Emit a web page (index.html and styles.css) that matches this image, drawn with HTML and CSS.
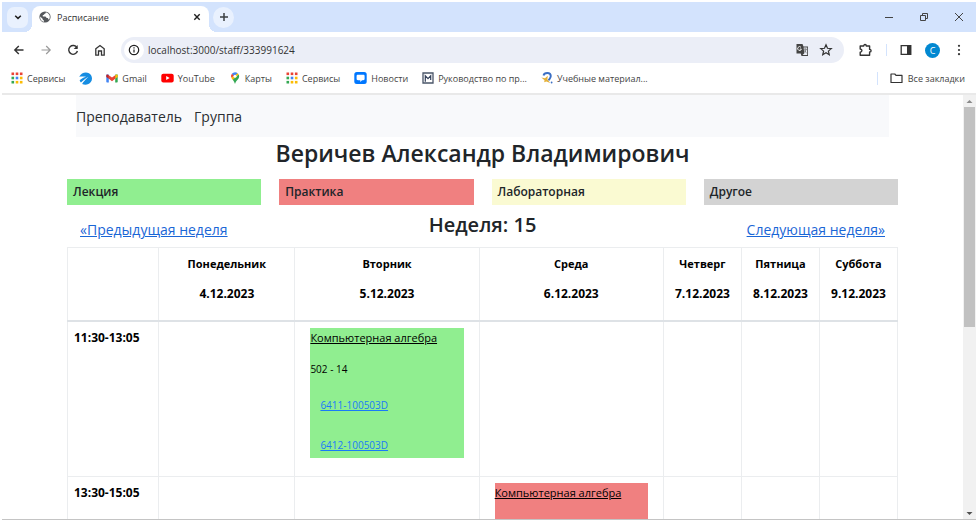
FILE: index.html
```html
<!DOCTYPE html>
<html lang="ru">
<head>
<meta charset="utf-8">
<title>Расписание</title>
<link rel="stylesheet" href="styles.css">
</head>
<body>
<svg class="defs" aria-hidden="true">
  <symbol id="apps" viewBox="0 0 12 12">
    <g fill="#ea4335"><rect x="0.5" y="0.5" width="2.6" height="2.6"/><rect x="4.7" y="0.5" width="2.6" height="2.6"/><rect x="8.9" y="0.5" width="2.6" height="2.6"/></g>
    <rect x="0.5" y="4.7" width="2.6" height="2.6" fill="#34a853"/><rect x="4.7" y="4.7" width="2.6" height="2.6" fill="#4285f4"/><rect x="8.9" y="4.7" width="2.6" height="2.6" fill="#fbbc04"/>
    <rect x="0.5" y="8.9" width="2.6" height="2.6" fill="#34a853"/><g fill="#fbbc04"><rect x="4.7" y="8.9" width="2.6" height="2.6"/><rect x="8.9" y="8.9" width="2.6" height="2.6"/></g>
  </symbol>
</svg>

<div class="browser">
  <header class="tabstrip">
    <button class="tab-search" aria-label="Поиск вкладок"><svg width="10" height="10" viewBox="0 0 10 10"><path d="M2.2 3.8 5 6.4 7.8 3.8" fill="none" stroke="#1f1f1f" stroke-width="1.5"/></svg></button>
    <div class="tab">
      <svg width="12" height="12" viewBox="0 0 12 12"><circle cx="6" cy="6" r="5.6" fill="#55585c"/><path d="M6.8 1.2c.3 1.1-.6 1.6-1.5 1.7.1 1-.7 1.2-1.5 1.2v1.5h2.4c1 .2.8 1.400 1.800 1.500h.8c.6.4.4 1.500 1.100 1.600A4.800 4.800 0 0 0 6.800 1.200zM1.200 5.600l2.600 2.500v1.100h1.200v1.500A4.800 4.800 0 0 1 1.200 5.600z" fill="#fff"/></svg>
      <span class="tab-title">Расписание</span>
      <button class="tab-close" aria-label="Закрыть вкладку"><svg width="8" height="8" viewBox="0 0 8 8"><path d="M1.300 1.300 6.700 6.700M6.700 1.300 1.300 6.700" stroke="#1f1f1f" stroke-width="1.400"/></svg></button>
    </div>
    <button class="tab-new" aria-label="Новая вкладка"><svg width="10" height="10" viewBox="0 0 10 10"><path d="M5 1v8M1 5h8" stroke="#3c4043" stroke-width="1.500"/></svg></button>
    <div class="window-controls">
      <button aria-label="Свернуть"><svg width="10" height="10" viewBox="0 0 10 10"><path d="M1 5.500h8" stroke="#444" /></svg></button>
      <button aria-label="Свернуть в окно"><svg width="10" height="10" viewBox="0 0 10 10"><path d="M1.500 3.500h5v5h-5zM3.500 3V1.500h5v5H7" fill="none" stroke="#444"/></svg></button>
      <button aria-label="Закрыть"><svg width="10" height="10" viewBox="0 0 10 10"><path d="M1 1l8 8M9 1 1 9" stroke="#444"/></svg></button>
    </div>
  </header>

  <div class="toolbar">
    <button aria-label="Назад"><svg width="12" height="12" viewBox="0 0 12 12"><path d="M10.500 6H2M5.800 2 1.800 6l4 4" fill="none" stroke="#333" stroke-width="1.400"/></svg></button>
    <button aria-label="Вперёд"><svg width="12" height="12" viewBox="0 0 12 12"><path d="M1.500 6H10M6.200 2l4 4-4 4" fill="none" stroke="#9a9a9a" stroke-width="1.200"/></svg></button>
    <button aria-label="Обновить"><svg width="12" height="12" viewBox="0 0 12 12"><path d="M10 3.800A4.400 4.400 0 1 0 10.400 7" fill="none" stroke="#333" stroke-width="1.400"/><path d="M10.700 1v4H6.700z" fill="#333"/></svg></button>
    <button aria-label="Главная"><svg width="12" height="12" viewBox="0 0 12 12"><path d="M1.800 4.800 6 1.500l4.200 3.300v6.300H7.500V7h-3v4.100H1.800z" fill="none" stroke="#333" stroke-width="1.300"/></svg></button>
    <div class="omnibox">
      <button class="site-info" aria-label="Сведения о сайте"><svg width="12" height="12" viewBox="0 0 12 12"><circle cx="6" cy="6" r="4.700" fill="none" stroke="#1f1f1f" stroke-width="1.200"/><path d="M6 5.400v3.200M6 3.300v1.200" stroke="#1f1f1f" stroke-width="1.200"/></svg></button>
      <input class="url" type="text" aria-label="Адрес" value="localhost:3000/staff/333991624">
      <button aria-label="Перевести страницу"><svg width="14" height="14" viewBox="0 0 14 14"><path d="M1.500 1h6l1 2.500H13V13H6.500l-.8-2.500H1.500z" fill="#444"/><path d="M8.600 4.400h3.600v7.700H7.600l1.700-1.800z" fill="#eceff7"/><path d="M6 4.300a1.900 1.900 0 1 0 .4 1.800H4.800" fill="none" stroke="#fff" stroke-width=".9"/><path d="M8.600 6.200h3.200M10.200 5.300v.9M11.200 6.200c-.4 1.600-1.200 2.700-2.200 3.400M9.200 7.300c.6 1.100 1.200 1.800 2.300 2.500" fill="none" stroke="#555" stroke-width=".7"/></svg></button>
      <button aria-label="Добавить в закладки"><svg width="14" height="14" viewBox="0 0 14 14"><path d="m7 1.800 1.500 3.500 3.800.3-2.900 2.500.9 3.700L7 9.800l-3.300 2 .9-3.700-2.900-2.500 3.800-.3z" fill="none" stroke="#333" stroke-width="1.200"/></svg></button>
    </div>
    <div class="toolbar-actions">
      <button aria-label="Расширения"><svg width="14" height="14" viewBox="0 0 14 14"><path d="M1.200 3h3.500c0-2 2.600-2 2.600 0h3.300v3.400c2 0 2 2.600 0 2.600v3.300H1.200V9.200c2.300-.2 2.300-3 0-3.200z" fill="none" stroke="#333" stroke-width="1.400" stroke-linejoin="round"/></svg></button>
      <span class="divider"></span>
      <button aria-label="Боковая панель"><svg width="12" height="12" viewBox="0 0 12 12"><path d="M1.200 1.700h9.600v8.600H1.200z" fill="none" stroke="#333" stroke-width="1.300"/><path d="M7 1.500h4v9H7z" fill="#333"/></svg></button>
      <button class="avatar" aria-label="Профиль">C</button>
      <button aria-label="Меню"><svg width="12" height="12" viewBox="0 0 12 12"><g fill="#333"><circle cx="6" cy="1.800" r="1.100"/><circle cx="6" cy="6" r="1.100"/><circle cx="6" cy="10.200" r="1.100"/></g></svg></button>
    </div>
  </div>

  <nav class="bookmarks" aria-label="Закладки">
    <a href="#"><svg width="12" height="12"><use href="#apps"/></svg>Сервисы</a>
    <a href="#" aria-label="Облако"><svg width="13" height="13" viewBox="0 0 12 12"><path d="M.2 4.300C2 .8 6-.6 9.200 1.100c3 1.700 3.600 5.500 1.700 8.200-1.900 2.600-5.300 3.200-8 1.800C3.700 9.300 5.500 7.300 8.800 4.300 6 5.800 3.800 7.800 1.800 9.600 1.200 9 .8 8.300.6 7.500 2.600 5.900 4.600 5 6.600 4.300 4.600 4.100 2.400 4 .2 4.300z" fill="#168de2"/></svg></a>
    <a href="#"><svg width="12" height="12" viewBox="0 0 12 12"><path d="M.3 2.500h2.500v8H1.100a.8.8 0 0 1-.8-.8z" fill="#4285f4"/><path d="M9.200 2.500h2.500v7.200a.8.8 0 0 1-.8.800H9.200z" fill="#34a853"/><path d="M9.200 3.200c1-1.200 2.500-.7 2.500.5v1.200L9.200 6.800z" fill="#fbbc04"/><path d="M.3 4.900V3.700c0-1.200 1.500-1.700 2.500-.5v3.600z" fill="#c5221f"/><path d="M2.800 3.200 6 5.600l3.200-2.400v3.600L6 9.200 2.800 6.800z" fill="#ea4335"/></svg>Gmail</a>
    <a href="#"><svg width="13" height="12" viewBox="0 0 13 12"><rect x=".3" y="1.800" width="12.400" height="8.600" rx="2" fill="#f00"/><path d="m5.200 4.100 3.500 2-3.500 2z" fill="#fff"/></svg>YouTube</a>
    <a href="#"><svg width="12" height="12" viewBox="0 0 12 12"><path d="M6 .2a4 4 0 0 0-3.100 1.500L4.800 5.500 8.800 1.300A4 4 0 0 0 6 .2z" fill="#4285f4"/><path d="M2.900 1.700A4 4 0 0 0 2.300 5.800L5 4.100z" fill="#ea4335"/><path d="M2.300 5.800 3.800 7.900 9.700 2.500 8.800 1.300z" fill="#fbbc04"/><path d="M3.700 7.800C4.900 9.300 5.400 10.200 6 11.900c.5-1.900 1.500-3 2.800-4.500 1.500-1.600 1.700-3.300.9-4.900z" fill="#34a853"/><circle cx="6" cy="4.200" r="1.500" fill="#fff"/></svg>Карты</a>
    <a href="#"><svg width="12" height="12"><use href="#apps"/></svg>Сервисы</a>
    <a href="#"><svg width="13" height="12" viewBox="0 0 13 12"><rect x=".3" width="12.400" height="12" rx="2.500" fill="#07f"/><path d="M4 2.800h5.200c1 0 1.400.4 1.400 1.400v2.600c0 1-.4 1.400-1.400 1.400H8l-1.700 1.700V8.200H4c-1 0-1.400-.4-1.400-1.400V4.200c0-1 .4-1.400 1.400-1.400z" fill="#fff"/></svg>Новости</a>
    <a href="#"><svg width="12" height="12" viewBox="0 0 12 12"><path d="M1 1h10v10H1z" fill="#fff" stroke="#4a5568" stroke-width="1.300"/><path d="M3.300 9.800V3.800L6 6.600l2.700-2.800V8" fill="none" stroke="#34415a" stroke-width="1.200"/></svg>Руководство по пр...</a>
    <a href="#"><svg width="12" height="12" viewBox="0 0 12 12"><path d="M2.500 3.500C3.300.2 9.600-.1 9.800 4c.1 2.200-1.700 2.800-2.200 4.500" fill="none" stroke="#3b6fc4" stroke-width="1.900"/><path d="M.3 5.500 4 6.300l2.800-2.600-.4 3.900L9.300 11 5.400 9.600 3.200 10.300l.3-2z" fill="#e5b13a"/><circle cx="10.600" cy="10.500" r=".9" fill="#3b6fc4"/></svg>Учебные материал...</a>
    <a class="all-bookmarks" href="#"><svg width="13" height="12" viewBox="0 0 13 12"><path d="M1 2h3.800L6 3.400h6v7.100H1z" fill="none" stroke="#333" stroke-width="1.200" stroke-linejoin="round"/></svg>Все закладки</a>
  </nav>

  <div class="viewport">
    <main class="page">
      <nav class="site-nav"><a href="#">Преподаватель</a><a href="#">Группа</a></nav>
      <h1>Веричев Александр Владимирович</h1>
      <div class="legend">
        <span class="lecture">Лекция</span>
        <span class="practice">Практика</span>
        <span class="lab">Лабораторная</span>
        <span class="other">Другое</span>
      </div>
      <div class="week">
        <a href="#">«Предыдущая неделя</a>
        <h2>Неделя: 15</h2>
        <a href="#">Следующая неделя»</a>
      </div>
      <table class="schedule">
        <colgroup><col class="col-time"><col class="col-mon"><col class="col-wide"><col class="col-wide"><col><col><col></colgroup>
        <thead>
          <tr>
            <th></th>
            <th scope="col"><p>Понедельник</p><p class="date">4.12.2023</p></th>
            <th scope="col"><p>Вторник</p><p class="date">5.12.2023</p></th>
            <th scope="col"><p>Среда</p><p class="date">6.12.2023</p></th>
            <th scope="col"><p>Четверг</p><p class="date">7.12.2023</p></th>
            <th scope="col"><p>Пятница</p><p class="date">8.12.2023</p></th>
            <th scope="col"><p>Суббота</p><p class="date">9.12.2023</p></th>
          </tr>
        </thead>
        <tbody>
          <tr>
            <th scope="row">11:30-13:05</th>
            <td></td>
            <td>
              <div class="lesson lecture">
                <p class="subject">Компьютерная алгебра</p>
                <p class="room">502 - 14</p>
                <a href="#">6411-100503D</a>
                <a href="#">6412-100503D</a>
              </div>
            </td>
            <td></td><td></td><td></td><td></td>
          </tr>
          <tr>
            <th scope="row">13:30-15:05</th>
            <td></td><td></td>
            <td>
              <div class="lesson practice">
                <p class="subject">Компьютерная алгебра</p>
              </div>
            </td>
            <td></td><td></td><td></td>
          </tr>
        </tbody>
      </table>
    </main>
    <div class="scrollbar" aria-hidden="true">
      <svg width="13" height="12" viewBox="0 0 13 12"><path d="M3.500 8h6l-3-3z" fill="#8a8a8a"/></svg>
      <div class="track"><div class="thumb"></div></div>
      <svg width="13" height="12" viewBox="0 0 13 12"><path d="M3.500 5h6l-3 3z" fill="#505050"/></svg>
    </div>
  </div>
</div>
</body>
</html>
```
FILE: styles.css
```css
* { box-sizing: border-box; }

body {
  margin: 0;
  background: #fff;
  color: #212529;
  font-family: "Open Sans", "Noto Sans", sans-serif;
  font-size: 12px;
}

button {
  display: flex;
  align-items: center;
  justify-content: center;
  padding: 0;
  border: 0;
  background: none;
  font: inherit;
}

svg { display: block; flex: none; }
h1, h2, p { margin: 0; }
.defs { position: absolute; width: 0; height: 0; }

.browser {
  display: flex;
  flex-direction: column;
  height: 100vh;
  padding: 2px;
}

/* Tab strip */
.tabstrip {
  display: flex;
  flex: none;
  align-items: center;
  height: 30px;
  padding-left: 5px;
  background: #d3e3fd;
}

.tab-search {
  width: 21px;
  height: 21px;
  border-radius: 7px;
  background: #e9f1fe;
}

.tab {
  position: relative;
  display: flex;
  align-self: stretch;
  align-items: center;
  width: 177px;
  margin: 4px 4px 0;
  padding: 0 8px 4px 7px;
  gap: 6px;
  border-radius: 8px 8px 0 0;
  background: #fff;
}

.tab::before,
.tab::after {
  content: "";
  position: absolute;
  bottom: 0;
  width: 8px;
  height: 8px;
}

.tab::before { right: 100%; background: radial-gradient(circle at 0 0, transparent 8px, #fff 8px); }
.tab::after { left: 100%; background: radial-gradient(circle at 100% 0, transparent 8px, #fff 8px); }

.tab-title { flex: 1; font-size: 9px; color: #333; }

.tab-new {
  width: 21px;
  height: 21px;
  border-radius: 50%;
  background: #e9f1fe;
}

.window-controls { display: flex; gap: 25px; margin-left: auto; padding-right: 12px; }

/* Toolbar */
.toolbar {
  display: flex;
  flex: none;
  align-items: center;
  height: 36px;
  padding: 0 11px;
  gap: 15px;
}

.omnibox {
  display: flex;
  flex: 1;
  align-items: center;
  height: 26px;
  padding: 0 11px 0 3px;
  gap: 10px;
  border-radius: 13px;
  background: #ebeef7;
}

.site-info { width: 20px; height: 20px; border-radius: 50%; background: #fff; }

.url {
  flex: 1;
  min-width: 0;
  margin-left: -6px;
  padding: 0;
  border: 0;
  background: none;
  color: #333;
  font: inherit;
  font-size: 10px;
}

.toolbar-actions { display: flex; align-items: center; gap: 13px; }
.divider { width: 1px; height: 12px; background: #d3e3fd; }

.avatar {
  width: 15px;
  height: 15px;
  border-radius: 50%;
  background: #0288d1;
  color: #fff;
  font-size: 9px;
}

/* Bookmarks bar */
.bookmarks {
  display: flex;
  flex: none;
  align-items: center;
  height: 27px;
  padding: 0 11px 5px 9px;
  gap: 14px;
  border-bottom: 2px solid #e9e9e9;
  font-size: 9px;
}

.bookmarks a {
  display: flex;
  align-items: center;
  gap: 4px;
  color: #444;
  text-decoration: none;
  white-space: nowrap;
}

.bookmarks .all-bookmarks {
  margin-left: auto;
  padding-left: 12px;
  gap: 5px;
  border-left: 1px solid #d3e3fd;
}

/* Page area */
.viewport {
  display: flex;
  flex: 1;
  min-height: 0;
  border-bottom: 1px solid #c4c4c4;
}

.page { flex: 1; padding: 0 65px; overflow: hidden; }

.scrollbar { display: flex; flex-direction: column; width: 13px; background: #f1f1f1; }
.track { flex: 1; padding: 0 1px; }
.thumb { height: 55%; background: #c1c1c1; }

.site-nav {
  display: flex;
  align-items: center;
  height: 42px;
  margin: 0 9px;
  gap: 12px;
  background: #f8f9fb;
  font-size: 14px;
}

.site-nav a { color: #2b2f33; text-decoration: none; }

h1 {
  font-size: 23px;
  font-weight: 600;
  line-height: 32px;
  text-align: center;
}

.legend {
  display: grid;
  grid-template-columns: repeat(4, 1fr);
  gap: 18px;
  margin-top: 10px;
}

.legend span {
  padding: 0 6px;
  font-weight: 600;
  line-height: 26px;
}

.lecture { background: #90ee90; }
.practice { background: #f08080; }
.lab { background: #fafad2; }
.other { background: #d3d3d3; }

.week {
  display: grid;
  grid-template-columns: 1fr auto 1fr;
  align-items: start;
  height: 42px;
  padding: 0 13px;
  font-size: 14px;
}

.week a { color: #1a66d6; line-height: 50px; }
.week a:last-child { text-align: right; }
h2 { font-size: 20px; font-weight: 600; line-height: 40px; }

/* Schedule */
.schedule {
  width: 100%;
  border-collapse: collapse;
  table-layout: fixed;
  color: #000;
}

.col-time { width: 11%; }
.col-mon { width: 16.4%; }
.col-wide { width: 22.2%; }

.schedule th,
.schedule td {
  border: 1px solid #ebedef;
  vertical-align: top;
  line-height: 18px;
}

.schedule thead th { padding: 7px 0 5px; border-bottom: 2px solid #dee2e6; font-size: 11px; }
.schedule thead p { margin-bottom: 12px; }
.schedule .date { font-size: 12px; }
.schedule tbody th { padding: 7px 6px; font-size: 12px; text-align: left; }
.schedule td { padding: 6px 15px 18px; }

.lesson { min-height: 130px; }
.subject { padding: 1px 0; font-size: 11px; line-height: 18px; text-decoration: underline; white-space: nowrap; }
.room { margin-top: 12px; font-size: 10px; line-height: 18px; }
.lesson a {
  display: block;
  padding: 18px 10px 4px;
  color: #1a7af8;
  font-size: 10px;
  line-height: 18px;
}
```
